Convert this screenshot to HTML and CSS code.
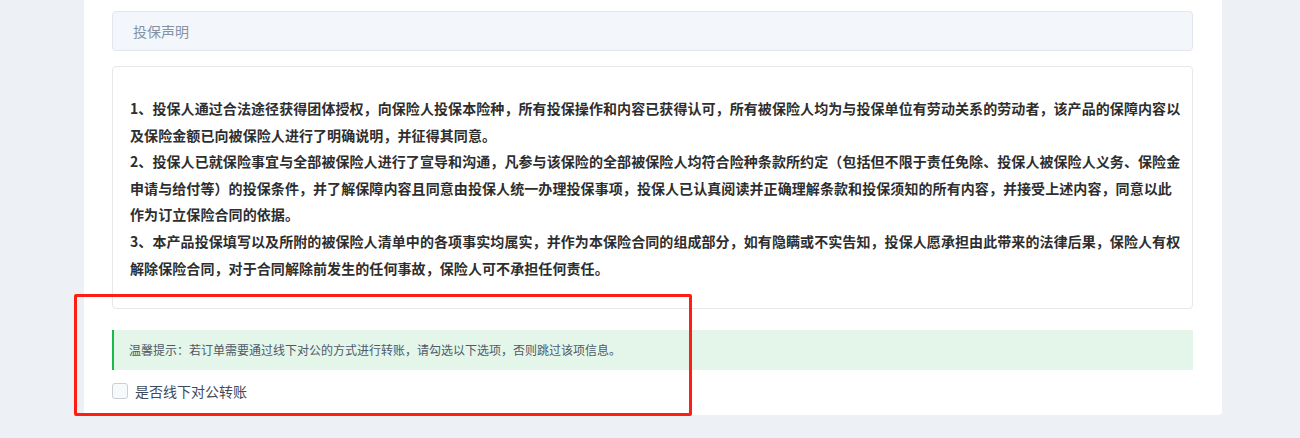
FILE: index.html
```html
<!DOCTYPE html>
<html lang="zh-CN">
<head>
  <meta charset="UTF-8">
  <meta name="viewport" content="width=device-width, initial-scale=1.0">
  <title>投保声明</title>
  <link rel="stylesheet" href="styles.css">
</head>
<body>
  <div class="pagina">
    <div class="cartao">
      <div class="titulo-secao">投保声明</div>
      <div class="declaracao">
        <p>1、投保人通过合法途径获得团体授权，向保险人投保本险种，所有投保操作和内容已获得认可，所有被保险人均为与投保单位有劳动关系的劳动者，该产品的保障内容以<br>及保险金额已向被保险人进行了明确说明，并征得其同意。</p>
        <p>2、投保人已就保险事宜与全部被保险人进行了宣导和沟通，凡参与该保险的全部被保险人均符合险种条款所约定（包括但不限于责任免除、投保人被保险人义务、保险金<br>申请与给付等）的投保条件，并了解保障内容且同意由投保人统一办理投保事项，投保人已认真阅读并正确理解条款和投保须知的所有内容，并接受上述内容，同意以此<br>作为订立保险合同的依据。</p>
        <p>3、本产品投保填写以及所附的被保险人清单中的各项事实均属实，并作为本保险合同的组成部分，如有隐瞒或不实告知，投保人愿承担由此带来的法律后果，保险人有权<br>解除保险合同，对于合同解除前发生的任何事故，保险人可不承担任何责任。</p>
      </div>
      <div class="aviso">温馨提示：若订单需要通过线下对公的方式进行转账，请勾选以下选项，否则跳过该项信息。</div>
      <label class="opcao">
        <span class="caixa"></span>
        <span>是否线下对公转账</span>
      </label>
    </div>
  </div>
  <div class="destaque"></div>
</body>
</html>
```

FILE: styles.css
```css
* {
  box-sizing: border-box;
}
body {
  position: relative;
  margin: 0;
  background-color: #edf1f5;
  font-family: "Noto Sans CJK SC", "Noto Sans", sans-serif;
  color: #333;
  height: 438px;
  overflow: hidden;
}
.pagina {
  padding-left: 84px;
}
.cartao {
  width: 1138px;
  margin-top: -20px;
  padding: 31px 29px 16px 28px;
  background-color: #fff;
  border-radius: 4px;
}
.titulo-secao {
  height: 40px;
  line-height: 38px;
  padding-left: 20px;
  font-size: 14px;
  color: #8592a4;
  background-color: #f3f6fa;
  border: 1px solid #e2e7ed;
  border-radius: 4px;
}
.declaracao {
  margin-top: 15px;
  padding: 28px 0 27px 17px;
  border: 1px solid #e6e8eb;
  border-radius: 4px;
  white-space: nowrap;
  overflow: hidden;
}
.declaracao p {
  margin: 0;
  font-size: 14px;
  font-weight: bold;
  line-height: 26.6px;
  letter-spacing: 0.08px;
  color: #2e2e2e;
}
.aviso {
  margin-top: 21px;
  height: 40px;
  line-height: 40px;
  padding-left: 15px;
  font-size: 12px;
  color: #4f5a69;
  background-color: #e3f6e9;
  border-left: 2px solid #19b94c;
}
.opcao {
  display: flex;
  align-items: center;
  gap: 7px;
  margin-top: 13px;
  height: 16px;
  font-size: 14px;
  color: #3f4a5a;
}
.caixa {
  width: 16px;
  height: 16px;
  border: 1px solid #c9ced7;
  border-radius: 3px;
  background-color: #f8f9fb;
}
.destaque {
  position: absolute;
  left: 74px;
  top: 294px;
  width: 618px;
  height: 122px;
  border: 3px solid #fe1f14;
  border-radius: 2px;
}
```
